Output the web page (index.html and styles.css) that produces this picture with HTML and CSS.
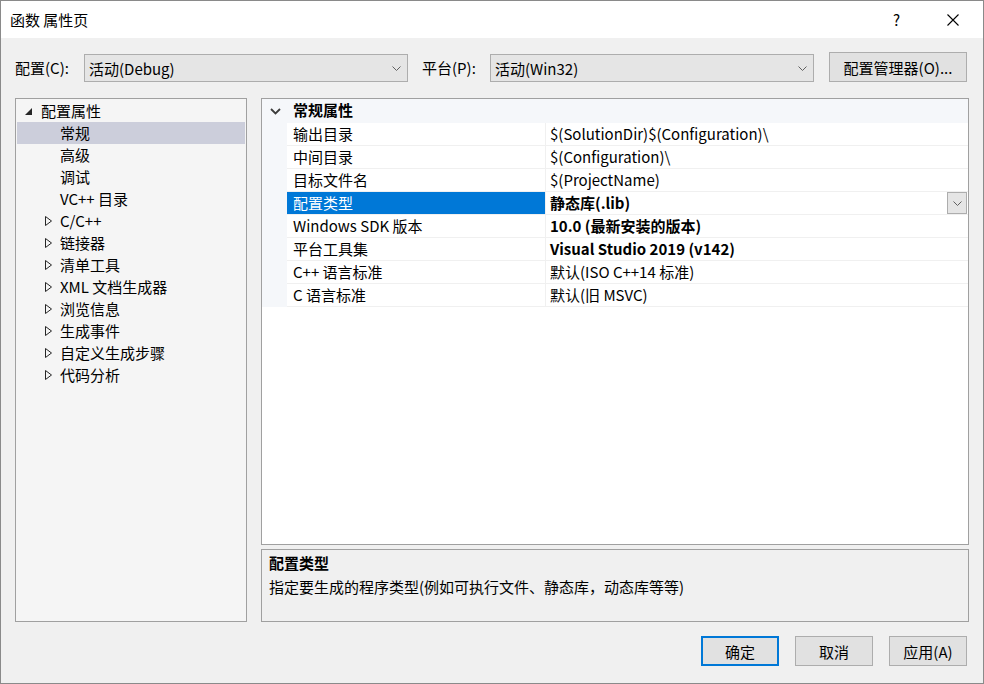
FILE: index.html
```html
<!DOCTYPE html>
<html>
<head>
    <link rel="stylesheet" href="styles.css">
</head>
<body>
    <div class="window">
        <div class="titlebar">
            <span class="title">函数 属性页</span>
            <span class="help">?</span>
            <span class="close">
                <svg width="12" height="12" viewBox="0 0 12 12"><path d="M0.5 0.5 L11.5 11.5 M11.5 0.5 L0.5 11.5" stroke="#000" stroke-width="1.1" fill="none"/></svg>
            </span>
        </div>

        <div class="content">
            <div class="config-row">
                <label class="cfg-label">配置(C):</label>
                <div class="combo">
                    <span>活动(Debug)</span>
                    <svg class="chev" width="9" height="5" viewBox="0 0 9 5"><polyline points="0.5,0.5 4.5,4.5 8.5,0.5" stroke="#606060" fill="none"/></svg>
                </div>
                <label class="cfg-label plat">平台(P):</label>
                <div class="combo">
                    <span>活动(Win32)</span>
                    <svg class="chev" width="9" height="5" viewBox="0 0 9 5"><polyline points="0.5,0.5 4.5,4.5 8.5,0.5" stroke="#606060" fill="none"/></svg>
                </div>
                <button class="btn mgr">配置管理器(O)...</button>
            </div>

            <div class="main">
                <div class="tree">
                    <div class="node root">
                        <span class="twisty"><svg width="7" height="7" viewBox="0 0 7 7"><polygon points="7,0 7,7 0,7" fill="#262626"/></svg></span>
                        配置属性
                    </div>
                    <div class="node leaf selected">常规</div>
                    <div class="node leaf">高级</div>
                    <div class="node leaf">调试</div>
                    <div class="node leaf">VC++ 目录</div>
                    <div class="node branch"><span class="twisty"><svg width="8" height="10" viewBox="0 0 8 10"><polygon points="0.5,0.5 6.5,5 0.5,9.5" stroke="#262626" fill="none"/></svg></span>C/C++</div>
                    <div class="node branch"><span class="twisty"><svg width="8" height="10" viewBox="0 0 8 10"><polygon points="0.5,0.5 6.5,5 0.5,9.5" stroke="#262626" fill="none"/></svg></span>链接器</div>
                    <div class="node branch"><span class="twisty"><svg width="8" height="10" viewBox="0 0 8 10"><polygon points="0.5,0.5 6.5,5 0.5,9.5" stroke="#262626" fill="none"/></svg></span>清单工具</div>
                    <div class="node branch"><span class="twisty"><svg width="8" height="10" viewBox="0 0 8 10"><polygon points="0.5,0.5 6.5,5 0.5,9.5" stroke="#262626" fill="none"/></svg></span>XML 文档生成器</div>
                    <div class="node branch"><span class="twisty"><svg width="8" height="10" viewBox="0 0 8 10"><polygon points="0.5,0.5 6.5,5 0.5,9.5" stroke="#262626" fill="none"/></svg></span>浏览信息</div>
                    <div class="node branch"><span class="twisty"><svg width="8" height="10" viewBox="0 0 8 10"><polygon points="0.5,0.5 6.5,5 0.5,9.5" stroke="#262626" fill="none"/></svg></span>生成事件</div>
                    <div class="node branch"><span class="twisty"><svg width="8" height="10" viewBox="0 0 8 10"><polygon points="0.5,0.5 6.5,5 0.5,9.5" stroke="#262626" fill="none"/></svg></span>自定义生成步骤</div>
                    <div class="node branch"><span class="twisty"><svg width="8" height="10" viewBox="0 0 8 10"><polygon points="0.5,0.5 6.5,5 0.5,9.5" stroke="#262626" fill="none"/></svg></span>代码分析</div>
                </div>

                <div class="right">
                    <div class="grid">
                        <div class="grid-head">
                            <span class="gutter"><svg width="11" height="7" viewBox="0 0 11 7"><polyline points="1,1 5.5,5.5 10,1" stroke="#3c3c3c" stroke-width="1.8" fill="none"/></svg></span>
                            <span class="head-title">常规属性</span>
                        </div>
                        <div class="prop">
                            <span class="gutter"></span>
                            <span class="name">输出目录</span>
                            <span class="value">$(SolutionDir)$(Configuration)\</span>
                        </div>
                        <div class="prop">
                            <span class="gutter"></span>
                            <span class="name">中间目录</span>
                            <span class="value">$(Configuration)\</span>
                        </div>
                        <div class="prop">
                            <span class="gutter"></span>
                            <span class="name">目标文件名</span>
                            <span class="value">$(ProjectName)</span>
                        </div>
                        <div class="prop">
                            <span class="gutter"></span>
                            <span class="name active">配置类型</span>
                            <span class="value bold">静态库(.lib)
                                <span class="drop"><svg width="9" height="5" viewBox="0 0 9 5"><polyline points="0.5,0.5 4.5,4.5 8.5,0.5" stroke="#606060" fill="none"/></svg></span>
                            </span>
                        </div>
                        <div class="prop">
                            <span class="gutter"></span>
                            <span class="name">Windows SDK 版本</span>
                            <span class="value bold">10.0 (最新安装的版本)</span>
                        </div>
                        <div class="prop">
                            <span class="gutter"></span>
                            <span class="name">平台工具集</span>
                            <span class="value bold">Visual Studio 2019 (v142)</span>
                        </div>
                        <div class="prop">
                            <span class="gutter"></span>
                            <span class="name">C++ 语言标准</span>
                            <span class="value">默认(ISO C++14 标准)</span>
                        </div>
                        <div class="prop">
                            <span class="gutter"></span>
                            <span class="name">C 语言标准</span>
                            <span class="value">默认(旧 MSVC)</span>
                        </div>
                    </div>
                    <div class="desc">
                        <div class="desc-title">配置类型</div>
                        <div class="desc-text">指定要生成的程序类型(例如可执行文件、静态库，动态库等等)</div>
                    </div>
                </div>
            </div>

            <div class="footer">
                <button class="btn ok">确定</button>
                <button class="btn">取消</button>
                <button class="btn">应用(A)</button>
            </div>
        </div>
    </div>
</body>
</html>
```

FILE: styles.css
```css
body {
    margin: 0;
    padding: 0;
    font-family: "Noto Sans CJK SC", sans-serif;
    font-size: 15px;
    color: #000;
}
.window {
    box-sizing: border-box;
    width: 984px;
    height: 684px;
    border: 1px solid #8a8a8a;
    background-color: #f0f0f0;
    display: flex;
    flex-direction: column;
    overflow: hidden;
}
.titlebar {
    height: 37px;
    background-color: #fff;
    display: flex;
    align-items: center;
    padding-left: 9px;
}
.title {
    flex: 1;
}
.help {
    width: 20px;
    margin-right: 34px;
}
.close {
    width: 36px;
    display: flex;
    align-items: center;
}
.content {
    flex: 1;
    padding: 0 14px;
}
.config-row {
    display: flex;
    align-items: center;
    height: 30px;
    margin-top: 14px;
}
.cfg-label {
    width: 69px;
    flex: 0 0 69px;
}
.cfg-label.plat {
    width: 68px;
    flex: 0 0 68px;
    margin-left: 14px;
}
.combo {
    box-sizing: border-box;
    width: 324px;
    height: 28px;
    margin-top: 2px;
    background-color: #e5e5e5;
    border: 1px solid #adadad;
    display: flex;
    align-items: center;
    padding-left: 4px;
    padding-right: 6px;
}
.combo span {
    flex: 1;
}
.btn {
    box-sizing: border-box;
    font-family: inherit;
    font-size: 15px;
    color: #000;
    background-color: #e1e1e1;
    border: 1px solid #adadad;
    height: 30px;
    width: 78px;
    padding: 0;
}
.btn.mgr {
    width: 138px;
    margin-left: 15px;
}
.btn.ok {
    border: 2px solid #0078d7;
}
.main {
    display: flex;
    gap: 14px;
    margin-top: 16px;
    height: 524px;
}
.tree {
    box-sizing: border-box;
    width: 232px;
    border: 1px solid #a0a0a0;
    background-color: #f5f5f5;
    padding: 1px;
}
.node {
    height: 22px;
    line-height: 22px;
    display: flex;
    align-items: center;
    white-space: nowrap;
}
.node.root {
    padding-left: 8px;
}
.node.root .twisty {
    width: 16px;
}
.node.branch {
    padding-left: 28px;
}
.node.branch .twisty {
    width: 15px;
}
.node.leaf {
    padding-left: 43px;
}
.twisty {
    display: flex;
    align-items: center;
}
.node.selected {
    background-color: #cccedb;
}
.right {
    width: 708px;
    display: flex;
    flex-direction: column;
    gap: 4px;
}
.grid {
    box-sizing: border-box;
    height: 447px;
    border: 1px solid #a0a0a0;
    background-color: #fff;
}
.grid-head {
    height: 24px;
    display: flex;
    align-items: center;
    background-color: #f5f7fa;
}
.gutter {
    width: 25px;
    flex: 0 0 25px;
    align-self: stretch;
    background-color: #f5f7fa;
    display: flex;
    align-items: center;
    padding-left: 8px;
    box-sizing: border-box;
}
.head-title {
    font-weight: bold;
    padding-left: 6px;
    line-height: 20px;
    padding-bottom: 3px;
}
.prop {
    display: flex;
    height: 23px;
    line-height: 22px;
}
.name {
    box-sizing: border-box;
    width: 259px;
    flex: 0 0 259px;
    padding-left: 6px;
    border-bottom: 1px solid #f0f0f0;
    border-right: 1px solid #f0f0f0;
    background-color: #fff;
}
.name.active {
    background-color: #0078d7;
    color: #fff;
}
.value {
    flex: 1;
    padding-left: 4px;
    border-bottom: 1px solid #f0f0f0;
    display: flex;
    align-items: center;
    white-space: nowrap;
}
.bold {
    font-weight: bold;
}
.drop {
    box-sizing: border-box;
    margin-left: auto;
    margin-right: 1px;
    width: 20px;
    height: 22px;
    background-color: #e5e5e5;
    border: 1px solid #adadad;
    display: flex;
    align-items: center;
    justify-content: center;
}
.desc {
    box-sizing: border-box;
    height: 73px;
    border: 1px solid #a0a0a0;
    padding: 1px 7px;
    line-height: 24px;
}
.desc-title {
    font-weight: bold;
}
.footer {
    display: flex;
    justify-content: flex-end;
    gap: 16px;
    margin-top: 14px;
    padding-right: 2px;
}
```
